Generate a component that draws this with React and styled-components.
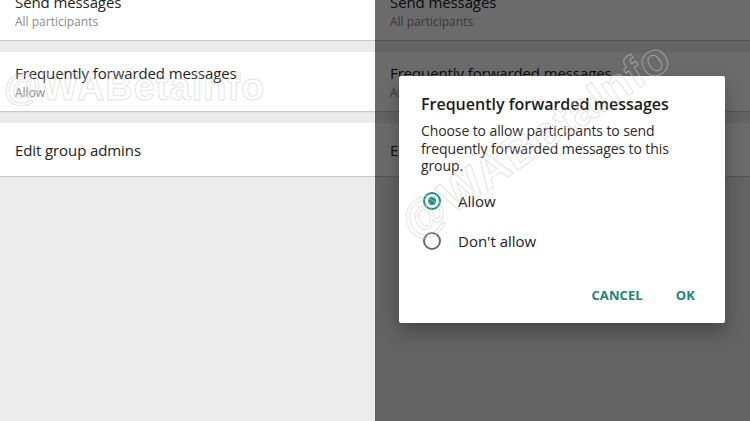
import React from 'react';
import styled, { createGlobalStyle } from 'styled-components';

const GlobalStyle = createGlobalStyle`
  html, body {
    margin: 0;
    padding: 0;
    width: 750px;
    height: 421px;
    overflow: hidden;
  }
  body {
    font-family: "Open Sans", "Noto Sans", sans-serif;
  }
`;

const Screen = styled.div`
  display: flex;
  width: 750px;
  height: 421px;
  overflow: hidden;
`;

const Panel = styled.div`
  position: relative;
  width: 375px;
  height: 100%;
  background: #ececec;
  overflow: hidden;
`;

const List = styled.div`
  display: flex;
  flex-direction: column;
  gap: 12px;
  margin-top: -18px;
`;

const Row = styled.div`
  display: flex;
  flex-direction: column;
  justify-content: center;
  height: ${(p) => p.$height || 58}px;
  padding: 0 15px;
  background: #fff;
  box-shadow: 0 1px 1px rgba(0, 0, 0, 0.14);
`;

const RowTitle = styled.div`
  font-size: 15px;
  line-height: 20px;
  color: #222;
  letter-spacing: -0.1px;
`;

const RowSub = styled.div`
  font-size: 12px;
  line-height: 17px;
  color: #8a8a8a;
  margin-top: 1px;
`;

const Watermark = styled.div`
  position: absolute;
  font-family: "Liberation Sans", Arial, sans-serif;
  font-weight: 700;
  font-size: ${(p) => p.$size}px;
  color: transparent;
  -webkit-text-stroke: 1px rgba(205, 205, 205, 0.55);
  letter-spacing: 1px;
  white-space: nowrap;
  pointer-events: none;
`;

const Scrim = styled.div`
  position: absolute;
  inset: 0;
  background: rgba(0, 0, 0, 0.58);
`;

const Dialog = styled.div`
  position: absolute;
  left: 24px;
  top: 76px;
  width: 326px;
  height: 247px;
  box-sizing: border-box;
  background: #fff;
  border-radius: 2px;
  box-shadow: 0 8px 18px rgba(0, 0, 0, 0.3);
  padding: 18px 22px 0 22px;
  display: flex;
  flex-direction: column;
`;

const DialogTitle = styled.div`
  font-size: 16px;
  font-weight: 600;
  line-height: 20px;
  color: #1c1c1c;
`;

const DialogBody = styled.div`
  margin-top: 8px;
  font-size: 14px;
  line-height: 17.5px;
  color: #2a2a2a;
  letter-spacing: -0.1px;
`;

const Options = styled.div`
  display: flex;
  flex-direction: column;
  gap: 20px;
  margin-top: 16px;
`;

const Option = styled.div`
  display: flex;
  align-items: center;
  gap: 17px;
  height: 20px;
`;

const Radio = styled.span`
  width: 14px;
  height: 14px;
  margin-left: 2px;
  border-radius: 50%;
  border: 2px solid ${(p) => (p.$checked ? '#1e8f82' : '#6c6c6c')};
  display: flex;
  align-items: center;
  justify-content: center;
  &::after {
    content: '';
    width: 8px;
    height: 8px;
    border-radius: 50%;
    background: ${(p) => (p.$checked ? '#1e8f82' : 'transparent')};
  }
`;

const OptionLabel = styled.span`
  font-size: 15px;
  color: #222;
`;

const Actions = styled.div`
  display: flex;
  justify-content: flex-end;
  gap: 33px;
  margin-top: auto;
  margin-bottom: 19px;
  padding-right: 8px;
`;

const ActionButton = styled.span`
  font-size: 13px;
  font-weight: 700;
  color: #1b857a;
  letter-spacing: 0.1px;
`;

function SettingsList() {
  return (
    <List>
      <Row $height={58}>
        <RowTitle>Send messages</RowTitle>
        <RowSub>All participants</RowSub>
      </Row>
      <Row $height={59}>
        <RowTitle>Frequently forwarded messages</RowTitle>
        <RowSub>Allow</RowSub>
      </Row>
      <Row $height={53}>
        <RowTitle>Edit group admins</RowTitle>
      </Row>
    </List>
  );
}

export default function App() {
  return (
    <Screen>
      <GlobalStyle />
      <Panel>
        <SettingsList />
        <Watermark $size={38} style={{ left: 4, top: 66 }}>
          @WABetaInfo
        </Watermark>
      </Panel>
      <Panel>
        <SettingsList />
        <Scrim />
        <Dialog>
          <DialogTitle>Frequently forwarded messages</DialogTitle>
          <DialogBody>
            Choose to allow participants to send frequently forwarded messages
            to this group.
          </DialogBody>
          <Options>
            <Option>
              <Radio $checked />
              <OptionLabel>Allow</OptionLabel>
            </Option>
            <Option>
              <Radio />
              <OptionLabel>Don't allow</OptionLabel>
            </Option>
          </Options>
          <Actions>
            <ActionButton>CANCEL</ActionButton>
            <ActionButton>OK</ActionButton>
          </Actions>
        </Dialog>
        <Watermark
          $size={46}
          style={{
            left: 30,
            top: 200,
            transform: 'rotate(-34deg)',
            transformOrigin: 'left center',
          }}
        >
          @WABetaInfo
        </Watermark>
      </Panel>
    </Screen>
  );
}
